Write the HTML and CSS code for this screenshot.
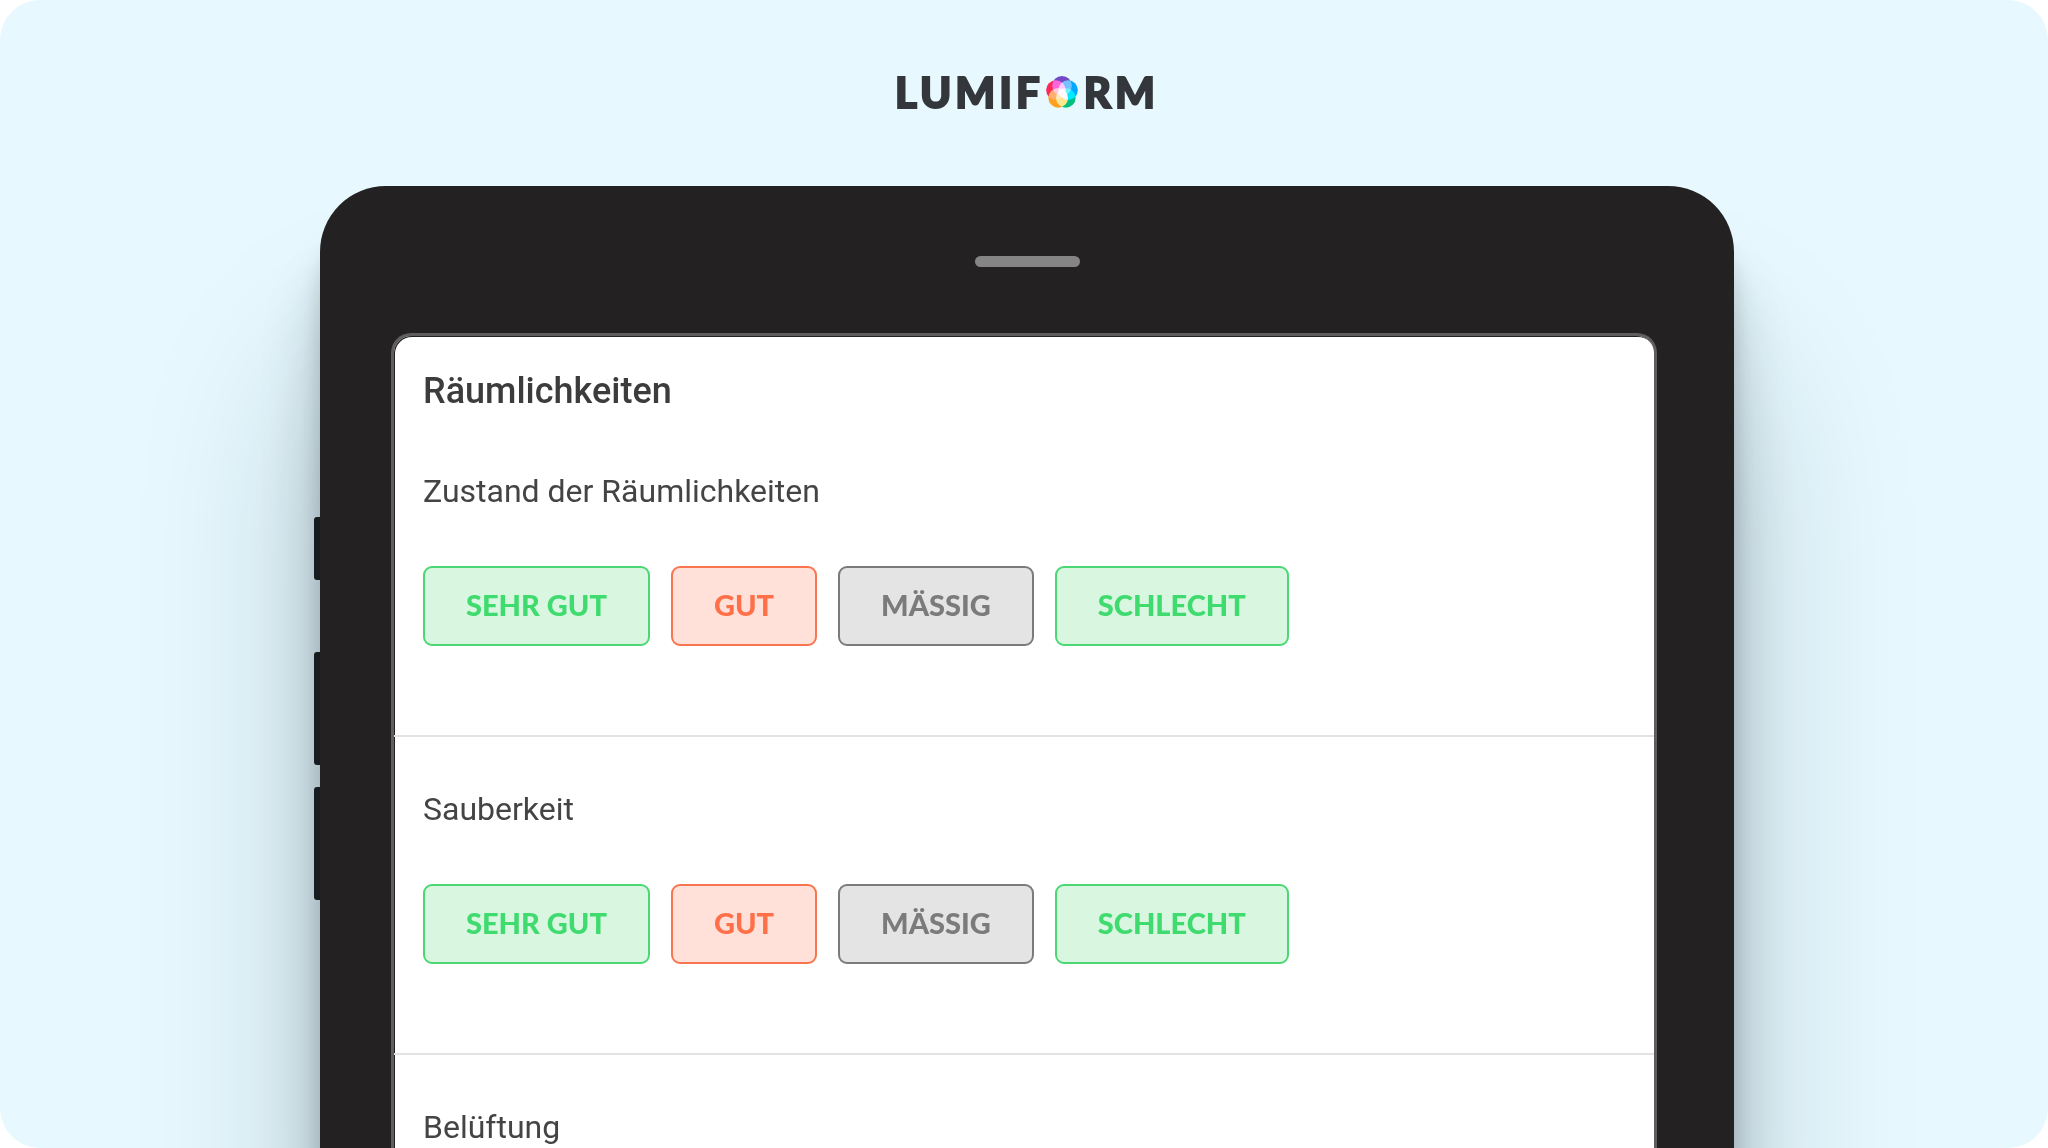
FILE: index.html
```html
<!DOCTYPE html>
<html lang="de">
<head>
<meta charset="utf-8">
<meta name="viewport" content="width=device-width, initial-scale=1">
<title>Lumiform – Räumlichkeiten</title>
<link rel="stylesheet" href="styles.css">
</head>
<body>
<div class="stage">
  <header class="header">
    <div class="logo">
      <span class="logo-text">LUMIF</span>
      <svg class="logo-mark" viewBox="0 0 32 32" role="img" aria-label="O">
        <g class="petals">
          <circle cx="16" cy="9.8" r="9.8" fill="#7448c4"/>
          <circle cx="22.1" cy="14.1" r="9.8" fill="#00a8ff"/>
          <circle cx="19.8" cy="21.9" r="9.8" fill="#00bf80"/>
          <circle cx="12.2" cy="21.9" r="9.8" fill="#ffa01e"/>
          <circle cx="9.9" cy="14.1" r="9.8" fill="#fa2a5a"/>
        </g>
      </svg>
      <span class="logo-text">RM</span>
    </div>
  </header>

  <main class="device">
    <div class="side-keys">
      <span class="key key-short"></span>
      <span class="key"></span>
      <span class="key key-last"></span>
    </div>
    <div class="tablet">
      <div class="bezel"><span class="speaker"></span></div>
      <div class="screen">
        <h1 class="title">Räumlichkeiten</h1>
        <section class="question">
          <h2 class="label">Zustand der Räumlichkeiten</h2>
          <div class="options">
            <button type="button" class="option green">SEHR GUT</button>
            <button type="button" class="option orange">GUT</button>
            <button type="button" class="option gray">MÄSSIG</button>
            <button type="button" class="option green">SCHLECHT</button>
          </div>
        </section>
        <section class="question">
          <h2 class="label">Sauberkeit</h2>
          <div class="options">
            <button type="button" class="option green">SEHR GUT</button>
            <button type="button" class="option orange">GUT</button>
            <button type="button" class="option gray">MÄSSIG</button>
            <button type="button" class="option green">SCHLECHT</button>
          </div>
        </section>
        <section class="question">
          <h2 class="label">Belüftung</h2>
        </section>
      </div>
    </div>
  </main>
</div>
</body>
</html>
```
FILE: styles.css
```css
* {
  box-sizing: border-box;
}

body {
  margin: 0;
  background: #fff;
  color: #3c3c3c;
  font-family: Roboto, "Liberation Sans", sans-serif;
}

.stage {
  display: flex;
  flex-direction: column;
  height: 100vh;
  overflow: hidden;
  border-radius: 40px;
  background: #e7f9ff;
}

/* Brand */
.header {
  display: flex;
  flex: none;
  align-items: center;
  justify-content: center;
  height: 186px;
  padding: 0 0 2px 6px;
}

.logo {
  display: flex;
  align-items: center;
  gap: 2px;
}

.logo-text {
  color: #33373b;
  font-family: Lato, sans-serif;
  font-size: 42px;
  font-weight: 900;
  line-height: 48px;
  letter-spacing: 4px;
  -webkit-text-stroke: 2px #33373b;
}

.logo-mark {
  width: 32px;
  height: 32px;
  margin-right: 4px;
}

.petals {
  isolation: isolate;
}

.petals circle {
  mix-blend-mode: screen;
}

/* Tablet */
.device {
  display: flex;
  flex: 1;
  width: 100%;
  max-width: 1420px;
  min-height: 0;
  margin: 0 auto;
}

.side-keys {
  display: flex;
  flex: none;
  flex-direction: column;
  gap: 72px;
  width: 6px;
  padding-top: 331px;
}

.key {
  flex: none;
  height: 113px;
  border-radius: 3px 0 0 3px;
  background: #1d2224;
}

.key-short {
  height: 63px;
}

.key-last {
  margin-top: -50px;
}

.tablet {
  display: flex;
  flex: 1;
  flex-direction: column;
  min-width: 0;
  padding: 0 77px 0 71px;
  border-radius: 66px 66px 0 0;
  background: #232122;
  box-shadow:
    0 180px 180px rgba(0, 20, 30, 0.22),
    0 80px 60px rgba(0, 20, 30, 0.2),
    0 40px 20px rgba(0, 20, 10, 0.15);
}

.bezel {
  display: flex;
  flex: none;
  align-items: center;
  justify-content: center;
  height: 147px;
  padding: 4px 0 0 6px;
}

.speaker {
  width: 105px;
  height: 11px;
  border-radius: 6px;
  background: #858585;
}

.screen {
  flex: 1;
  min-height: 0;
  border: 3px solid #5f5d5e;
  border-bottom: 0;
  border-radius: 20px 20px 0 0;
  background: #fff;
  box-shadow: inset 1px 1px 0 #232122;
}

.title {
  margin: 31px 0 4px;
  padding: 0 29px;
  font-size: 36px;
  font-weight: 500;
  line-height: 48px;
}

/* Questions */
.question {
  padding: 52px 29px 89px;
  border-bottom: 2px solid #e3e3e3;
}

.label {
  margin: 0 0 55px;
  color: #444;
  font-size: 32px;
  font-weight: 400;
  line-height: 40px;
}

.options {
  display: flex;
  gap: 21px;
}

.option {
  height: 80px;
  padding: 0 41px 2px;
  border: 2px solid;
  border-radius: 9px;
  font-family: Lato, sans-serif;
  font-size: 29px;
  font-weight: 900;
  line-height: 36px;
}

.green {
  border-color: #4bd874;
  background: #d8f6e0;
  color: #3fdb6e;
}

.orange {
  border-color: #f9754f;
  background: #ffe1da;
  color: #ff7048;
}

.gray {
  border-color: #7b7b7b;
  background: #e4e4e4;
  color: #7b7b7b;
}
```
